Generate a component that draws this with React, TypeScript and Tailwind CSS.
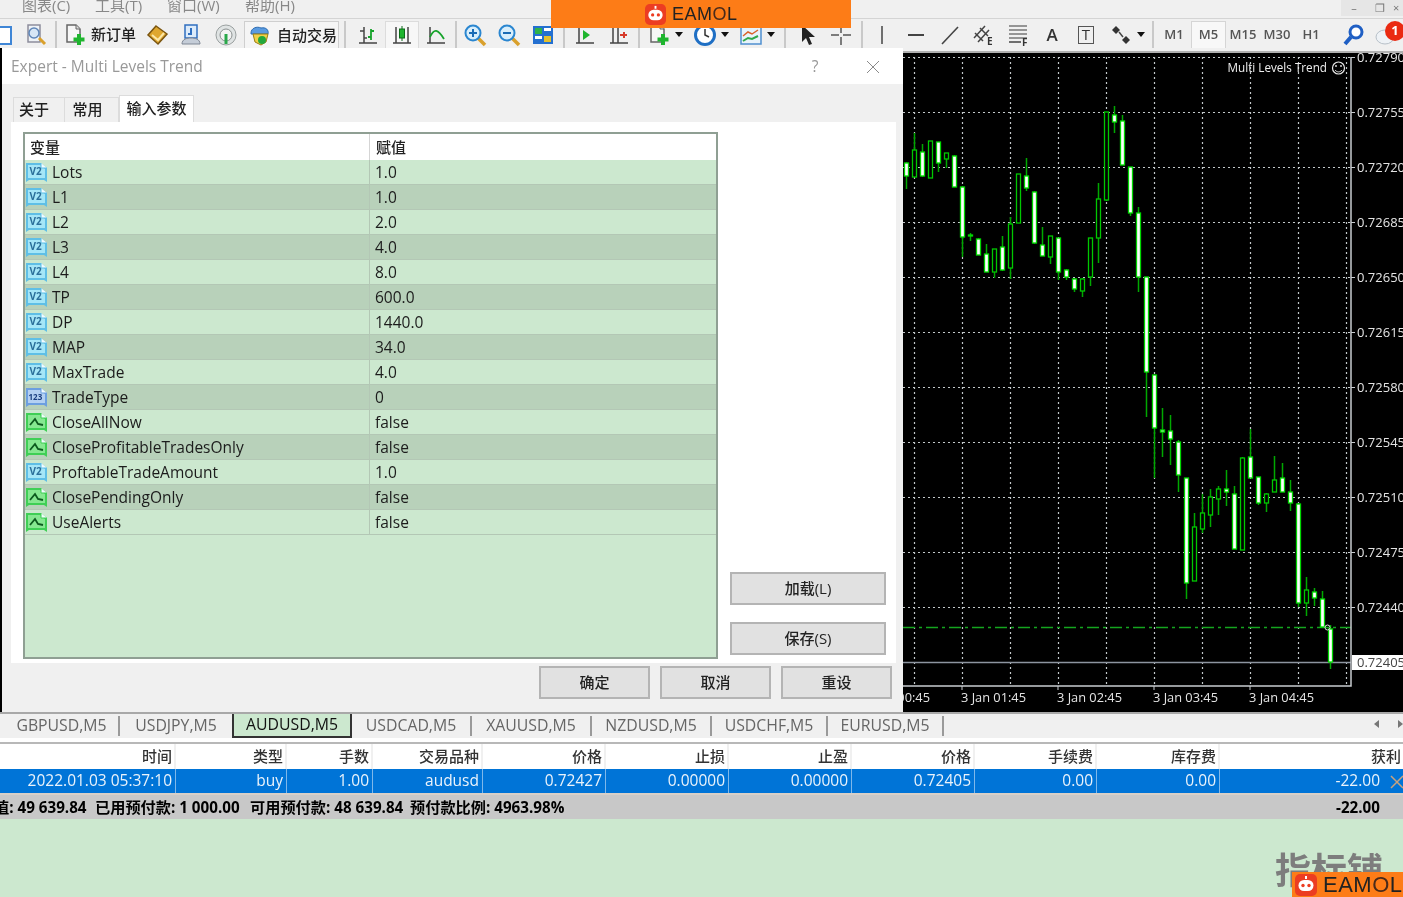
import React from 'react';

const params: [string, string, 'v' | 'n' | 'b'][] = [
  ['Lots', '1.0', 'v'],
  ['L1', '1.0', 'v'],
  ['L2', '2.0', 'v'],
  ['L3', '4.0', 'v'],
  ['L4', '8.0', 'v'],
  ['TP', '600.0', 'v'],
  ['DP', '1440.0', 'v'],
  ['MAP', '34.0', 'v'],
  ['MaxTrade', '4.0', 'v'],
  ['TradeType', '0', 'n'],
  ['CloseAllNow', 'false', 'b'],
  ['CloseProfitableTradesOnly', 'false', 'b'],
  ['ProftableTradeAmount', '1.0', 'v'],
  ['ClosePendingOnly', 'false', 'b'],
  ['UseAlerts', 'false', 'b'],
];

// [wickTop, wickBottom, bodyTop, bodyBottom, hollow] in page pixels
const candles: [number, number, number, number, number][] = [
  [162, 189, 163, 176, 0], [133, 177, 150, 177, 1], [144, 177, 152, 176, 0], [141, 178, 141, 178, 1],
  [142, 172, 142, 163, 0], [153, 168, 153, 159, 1], [155, 187, 156, 187, 0], [186, 257, 187, 237, 0],
  [233, 241, 235, 236, 0], [238, 255, 239, 255, 0], [244, 272, 254, 272, 0], [249, 278, 249, 272, 1],
  [236, 271, 247, 270, 0], [217, 279, 224, 268, 1], [174, 223, 174, 223, 1], [158, 191, 176, 188, 0],
  [191, 244, 192, 243, 0], [227, 256, 245, 256, 0], [236, 264, 236, 257, 1], [238, 280, 238, 272, 0],
  [269, 280, 270, 277, 0], [278, 292, 279, 289, 0], [278, 297, 279, 291, 1], [238, 286, 238, 277, 1],
  [183, 263, 199, 238, 1], [112, 201, 112, 200, 1], [106, 133, 115, 122, 0], [115, 165, 121, 165, 0],
  [167, 216, 167, 213, 0], [207, 292, 213, 277, 0], [277, 417, 277, 372, 0], [375, 478, 375, 428, 0],
  [408, 457, 430, 432, 0], [415, 465, 431, 439, 0], [440, 492, 442, 475, 0], [478, 599, 478, 583, 0],
  [513, 581, 527, 581, 1], [494, 533, 513, 529, 1], [489, 527, 497, 515, 1], [486, 515, 489, 499, 1],
  [470, 506, 489, 492, 0], [486, 549, 494, 549, 0], [457, 550, 458, 550, 1], [429, 478, 457, 478, 0],
  [477, 505, 477, 503, 0], [493, 512, 494, 503, 1], [456, 492, 480, 492, 1], [463, 492, 478, 492, 0],
  [480, 511, 492, 503, 0], [503, 607, 504, 603, 0], [577, 616, 590, 603, 1], [588, 606, 592, 598, 0],
  [591, 628, 599, 627, 0], [625, 669, 629, 662, 0],
];

const priceLines = [
  ['0.72790', 57], ['0.72755', 112], ['0.72720', 167], ['0.72685', 222], ['0.72650', 277],
  ['0.72615', 332], ['0.72580', 387], ['0.72545', 442], ['0.72510', 497], ['0.72475', 552], ['0.72440', 607],
] as const;

const gridX = [914, 962, 1010, 1058, 1106, 1154, 1202, 1250, 1298, 1346];

const symbolTabs = [
  ['GBPUSD,M5', 'w-[120px] pl-[5px]'], ['USDJPY,M5', 'w-[112px]'], ['AUDUSD,M5', 'w-[120px]'], ['USDCAD,M5', 'w-[120px]'],
  ['XAUUSD,M5', 'w-[120px]'], ['NZDUSD,M5', 'w-[120px]'], ['USDCHF,M5', 'w-[116px]'], ['EURUSD,M5', 'w-[116px]'],
];

const cols = ['时间', '类型', '手数', '交易品种', '价格', '止损', '止盈', '价格', '手续费', '库存费', '获利'];
const rowVals = ['2022.01.03 05:37:10', 'buy', '1.00', 'audusd', '0.72427', '0.00000', '0.00000', '0.72405', '0.00', '0.00', '-22.00'];
const colGrid = 'grid grid-cols-[176px_111px_86px_110px_123px_123px_123px_123px_122px_123px_1fr]';

const ParamIcon: React.FC<{ kind: 'v' | 'n' | 'b' }> = ({ kind }) => {
  const edge = kind === 'b' ? '#3fcf55' : kind === 'n' ? '#6d9fe0' : '#5fbfe6';
  const face = kind === 'b' ? '#86e891' : kind === 'n' ? '#b4d0f2' : '#a5e6f7';
  return (
    <svg width="22" height="20" viewBox="0 0 22 20" className="shrink-0">
      <path d="M0 1h15l6 5v14l-3-2H3l-3 2z" fill={edge} />
      <path d="M2 3h12l5 4v9H2z" fill={face} />
      <path d="M15 1v5h6" fill="#f2fbff" stroke={edge} />
      {kind === 'v' && <text x="3.500" y="13" fontSize="10" fontWeight="700" fill="#2b6f9a">V2</text>}
      {kind === 'n' && <text x="2.500" y="13" fontSize="8" fontWeight="700" fill="#1c3f80">123</text>}
      {kind === 'b' && <path d="M4 13l5-6 3 5 5 1" fill="none" stroke="#0d5a1f" strokeWidth="1.800" />}
    </svg>
  );
};

const Btn: React.FC<{ label: string; className: string }> = ({ label, className }) => (
  <button className={`h-[33px] bg-[#e1e1e1] border-2 border-[#b4b4b4] text-[15px] font-medium text-[#222] flex items-center justify-center ${className}`}>
    {label}
  </button>
);

const Slot: React.FC<{ className?: string; children?: React.ReactNode }> = ({ className = 'w-[34px]', children }) => (
  <div className={`h-[27px] shrink-0 flex items-center justify-center ${className}`}>{children}</div>
);

const Sep = ({ className = 'w-[6px]' }: { className?: string }) => (
  <div className={`h-[27px] shrink-0 flex justify-center ${className}`}>
    <div className="w-[2px] h-full bg-[#c9c9c9]" />
  </div>
);

const Caret = () => <div className="w-0 h-0 ml-[4px] border-x-[4px] border-x-transparent border-t-[5px] border-t-[#111]" />;

const Ico: React.FC<{ children: React.ReactNode; size?: number }> = ({ children, size = 24 }) => (
  <svg width={size} height={size} viewBox="0 0 24 24" className="shrink-0">{children}</svg>
);

const Lens: React.FC<{ plus?: boolean }> = ({ plus }) => (
  <Ico>
    <path d="M15 15l7 7" stroke="#d9a02c" strokeWidth="3.500" />
    <circle cx="10" cy="10" r="7.500" fill="#d8eefb" stroke="#2a86d0" strokeWidth="2" />
    <path d="M6 10h8" stroke="#1a6cb5" strokeWidth="2" />
    {plus && <path d="M10 6v8" stroke="#1a6cb5" strokeWidth="2" />}
  </Ico>
);

const PlusDoc = () => (
  <Ico>
    <path d="M4 2h9l4 4v13H4z" fill="#f6f6f6" stroke="#666" strokeWidth="1.500" />
    <path d="M13 2v4h4" fill="#ddd" stroke="#666" />
    <path d="M16 11v11M10.500 16.500h11" stroke="#1eb52e" strokeWidth="4" />
  </Ico>
);

const Robot: React.FC<{ size: number }> = ({ size }) => (
  <svg width={size} height={size} viewBox="0 0 22 22" className="shrink-0">
    <rect width="22" height="22" rx="5" fill="#ec3d22" />
    <path d="M11 2v3" stroke="#fff" strokeWidth="2" />
    <rect x="3.500" y="6" width="15" height="11" rx="5.500" fill="#fff" />
    <circle cx="8" cy="11.500" r="1.700" fill="#ec3d22" />
    <circle cx="14" cy="11.500" r="1.700" fill="#ec3d22" />
  </svg>
);

const Logo: React.FC<{ size: number; className: string }> = ({ size, className }) => (
  <div className="flex items-center gap-[6px]">
    <Robot size={size} />
    <span className={`font-['Liberation_Sans',sans-serif] text-[#222] tracking-[0.5px] ${className}`}>
      EAM<span className="text-[#4a2a1a]">O</span>L
    </span>
  </div>
);

const Toolbar = () => (
  <div className="h-[27px] flex items-center -ml-[15px] shrink-0">
    <Slot><Ico><rect x="3" y="4" width="18" height="17" fill="#fff" stroke="#3f86d6" strokeWidth="2" /></Ico></Slot>
    <Slot>
      <Ico>
        <path d="M4 2h12v17H4z" fill="#eef2f6" stroke="#8d8d9c" strokeWidth="1.500" />
        <circle cx="10" cy="10" r="5" fill="#d7e6f5" stroke="#5f86b8" strokeWidth="1.500" />
        <path d="M15 15l6 6" stroke="#d9a02c" strokeWidth="3" />
      </Ico>
    </Slot>
    <Sep />
    <Slot className="w-[32px]"><PlusDoc /></Slot>
    <span className="w-[51px] shrink-0 text-[15px] font-medium text-[#222]">新订单</span>
    <Slot className="w-[32px]">
      <Ico><path d="M10 3l11 8-9 10-10-9z" fill="#dfa72f" stroke="#7a5510" strokeWidth="1.500" /><path d="M6 12l6 5 6-7" fill="none" stroke="#fbe7a8" strokeWidth="2" /></Ico>
    </Slot>
    <Slot>
      <Ico>
        <path d="M6 2h12v13H6z" fill="#dcebfa" stroke="#2f6fc0" strokeWidth="1.500" />
        <path d="M12 5v6h-3" fill="none" stroke="#2f6fc0" strokeWidth="2" />
        <path d="M3 21c0-5 5-6 9-6s9 1 9 6z" fill="#c5cdd8" stroke="#7e8795" />
      </Ico>
    </Slot>
    <Slot className="w-[36px]">
      <Ico>
        <circle cx="12" cy="12" r="10" fill="#dfe3e3" stroke="#9aa0a0" />
        <circle cx="12" cy="12" r="6" fill="#f3f3f3" stroke="#8a9090" />
        <path d="M12 11v10" stroke="#2aa84a" strokeWidth="3" />
      </Ico>
    </Slot>
    <div className="w-[95px] h-[27px] shrink-0 border-x border-t border-[#cfcfcf] flex items-center pl-[3px] gap-[5px] bg-[#f5f5f5]">
      <Ico>
        <path d="M3 10c0-5 6-7 10-5 5-1 8 2 7 6H3z" fill="#5a9be0" stroke="#2b6ab0" />
        <path d="M5 11h15l-2 8-5 3-6-3z" fill="#f1d049" stroke="#9a7d12" />
        <circle cx="14" cy="17" r="4" fill="#23a83c" />
      </Ico>
      <span className="text-[15px] font-medium text-[#222] whitespace-nowrap">自动交易</span>
    </div>
    <Sep className="w-[12px]" />
    <Slot>
      <Ico>
        <path d="M8 4v16M4 8h4M8 15h3M3 20h18" fill="none" stroke="#444" strokeWidth="1.500" />
        <path d="M15 6v11M15 8h3M12 14h3" fill="none" stroke="#17a32b" strokeWidth="1.800" />
      </Ico>
    </Slot>
    <Slot className="w-[34px] bg-[#f7f7f7] border-x border-t border-[#dcdcdc]">
      <Ico>
        <path d="M6 4v16M18 4v16M3 20h18" fill="none" stroke="#444" strokeWidth="1.500" />
        <path d="M12 3v15" stroke="#0b6b18" />
        <rect x="9.500" y="6" width="5" height="9" fill="#1eb52e" stroke="#0b6b18" />
      </Ico>
    </Slot>
    <Slot>
      <Ico>
        <path d="M6 4v16M3 20h18" fill="none" stroke="#444" strokeWidth="1.500" />
        <path d="M6 14C10 5 14 6 20 16" fill="none" stroke="#17a32b" strokeWidth="1.800" />
      </Ico>
    </Slot>
    <Sep className="w-[5px]" />
    <Slot><Lens plus /></Slot>
    <Slot><Lens /></Slot>
    <Slot>
      <Ico>
        <rect x="2" y="3" width="20" height="18" fill="#2470d0" />
        <rect x="4" y="5" width="7" height="6" fill="#2fb24a" /><rect x="13" y="5" width="7" height="3" fill="#fff" />
        <rect x="4" y="13" width="7" height="3" fill="#fff" /><rect x="13" y="13" width="7" height="6" fill="#e4c02f" />
      </Ico>
    </Slot>
    <Sep className="w-[8px]" />
    <Slot>
      <Ico>
        <path d="M6 4v16M3 20h18" fill="none" stroke="#444" strokeWidth="1.500" />
        <path d="M10 7l7 5-7 5z" fill="#1eb52e" />
      </Ico>
    </Slot>
    <Slot>
      <Ico>
        <path d="M6 4v16M11 4v16M3 20h18" fill="none" stroke="#444" strokeWidth="1.500" />
        <path d="M13 12h7M17 9v6" stroke="#d63a2a" strokeWidth="2" />
      </Ico>
    </Slot>
    <Sep />
    <Slot className="w-[46px] justify-start pl-[5px]"><PlusDoc /><Caret /></Slot>
    <Slot className="w-[46px] justify-start pl-[5px]">
      <Ico>
        <circle cx="12" cy="12" r="9.500" fill="#fff" stroke="#1f6fc4" strokeWidth="3" />
        <path d="M12 6v6l4 2" fill="none" stroke="#333" strokeWidth="1.500" />
      </Ico>
      <Caret />
    </Slot>
    <Slot className="w-[46px] justify-start pl-[5px]">
      <Ico>
        <rect x="2" y="3" width="20" height="18" fill="#e8f3fb" stroke="#4f8fcf" strokeWidth="1.500" />
        <path d="M4 13l5-4 4 2 6-4" fill="none" stroke="#d9622a" strokeWidth="1.500" />
        <path d="M4 18l5-3 4 1 6-3" fill="none" stroke="#2fa84a" strokeWidth="2" />
      </Ico>
      <Caret />
    </Slot>
    <Sep className="w-[9px]" />
    <Slot>
      <Ico><path d="M8 2l0 17 4-4 3 7 3-1-3-7h6z" fill="#222" /></Ico>
    </Slot>
    <Slot className="w-[36px]">
      <Ico><path d="M12 2v8M12 14v8M2 12h8M14 12h8" stroke="#555" strokeWidth="1.500" /></Ico>
    </Slot>
    <Sep />
    <Slot><Ico><path d="M12 3v18" stroke="#444" strokeWidth="1.500" /></Ico></Slot>
    <Slot><Ico><path d="M4 12h16" stroke="#444" strokeWidth="2" /></Ico></Slot>
    <Slot><Ico><path d="M4 21L20 4" stroke="#444" strokeWidth="1.600" /></Ico></Slot>
    <Slot>
      <svg width="24" height="24" viewBox="0 0 24 24">
        <path d="M2 15L13 3M6 19L17 7M3 10l8 8M8 5l8 8" stroke="#444" strokeWidth="1.500" />
        <text x="15" y="22" fontSize="10" fontWeight="700" fill="#333">E</text>
      </svg>
    </Slot>
    <Slot>
      <svg width="24" height="24" viewBox="0 0 24 24">
        <path d="M3 3h18M3 7h18M3 11h18M3 15h18" stroke="#777" strokeWidth="1.500" />
        <path d="M3 19h12" stroke="#444" strokeWidth="1.500" />
        <text x="16" y="23" fontSize="10" fontWeight="700" fill="#333">F</text>
      </svg>
    </Slot>
    <Slot><span className="text-[17px] font-semibold text-[#333]">A</span></Slot>
    <Slot>
      <div className="w-[16px] h-[18px] border border-[#555] flex items-center justify-center text-[15px] leading-none text-[#333]">T</div>
    </Slot>
    <Slot className="w-[46px] justify-start pl-[6px]">
      <Ico>
        <path d="M7 3l4 4-4 4-4-4zM17 13l4 4-4 4-4-4z" fill="#333" />
        <path d="M10 9l4 5" stroke="#444" strokeWidth="1.500" />
      </Ico>
      <Caret />
    </Slot>
    <Sep className="w-[8px]" />
    <Slot className="w-[34px] text-[13px] font-semibold text-[#555]">M1</Slot>
    <Slot className="w-[35px] text-[13px] font-semibold text-[#555] bg-[#f8f8f8] border-x border-t border-[#d5d5d5]">M5</Slot>
    <Slot className="w-[34px] text-[13px] font-semibold text-[#555]">M15</Slot>
    <Slot className="w-[34px] text-[13px] font-semibold text-[#555]">M30</Slot>
    <Slot className="w-[34px] text-[13px] font-semibold text-[#555]">H1</Slot>
    <Slot className="w-[9px]" />
    <Slot>
      <Ico><circle cx="14" cy="9" r="6" fill="#fff" stroke="#1f5fc4" strokeWidth="3" /><path d="M9 14l-6 7" stroke="#1f5fc4" strokeWidth="4" /></Ico>
    </Slot>
    <Slot className="w-[31px] relative">
      <Ico><ellipse cx="10" cy="14" rx="9" ry="7" fill="#eef2f6" stroke="#b7c0c8" /></Ico>
      <span className="absolute left-[14px] top-[0px] w-[20px] h-[20px] rounded-full bg-[#ea2a12] text-white text-[13px] font-bold flex items-center justify-center">1</span>
    </Slot>
  </div>
);

const Chart = () => (
  <svg viewBox="903 53 500 659" className="w-[500px] h-[659px] block">
    <rect x="903" y="53" width="500" height="659" fill="#000" />
    {priceLines.map(([, y]) => (
      <line key={y} x1="903" x2="1351" y1={y + 0.5} y2={y + 0.5} stroke="#c2c8ca" strokeWidth="1.200" strokeDasharray="2 3" />
    ))}
    {gridX.map(x => (
      <line key={x} x1={x + 0.5} x2={x + 0.5} y1="57" y2="686" stroke="#c2c8ca" strokeWidth="1.200" strokeDasharray="2 3" />
    ))}
    <line x1="903" x2="1351" y1="662.500" y2="662.500" stroke="#8d95a0" strokeWidth="1.500" />
    <line x1="903" x2="1351" y1="627.500" y2="627.500" stroke="#14a51f" strokeDasharray="12 4 3 4" strokeWidth="1.500" />
    {candles.map(([wt, wb, bt, bb, hollow], i) => {
      const x = 906.5 + i * 8;
      return (
        <g key={i}>
          <line x1={x} x2={x} y1={wt} y2={wb} stroke="#00a800" strokeWidth="1.500" />
          <rect x={x - 2} y={bt} width="4" height={Math.max(bb - bt, 1)} fill={hollow ? '#000' : '#fff'} stroke={hollow ? '#00c800' : '#00d800'} strokeWidth="1.300" />
        </g>
      );
    })}
    <circle cx="1327.500" cy="627.500" r="2.500" fill="none" stroke="#ddd" />
    <path d="M1351 57v629H903" fill="none" stroke="#c8ccd0" strokeWidth="1.500" />
    {priceLines.map(([label, y]) => (
      <g key={label}>
        <line x1="1351" x2="1355" y1={y + 0.5} y2={y + 0.5} stroke="#c8ccd0" />
        <text x="1357" y={y + 5} fontSize="13" fontWeight="500" fill="#e4e4e4">{label}</text>
      </g>
    ))}
    <rect x="1352" y="655" width="51" height="15" fill="#fff" />
    <text x="1357" y="667" fontSize="13" fontWeight="500" fill="#444">0.72405</text>
    {[866, 962, 1058, 1154, 1250].map((x, i) => (
      <g key={x}>
        <line x1={x} x2={x} y1="686" y2="690" stroke="#c8ccd0" />
        <text x={x - 1} y="702" fontSize="12.800" fontWeight="500" fill="#e4e4e4">{`3 Jan 0${i}:45`}</text>
      </g>
    ))}
    <text x="1327" y="72" fontSize="11.700" fontWeight="500" fill="#efefef" textAnchor="end">Multi Levels Trend</text>
    <circle cx="1338.500" cy="68" r="6" fill="none" stroke="#e8e8e8" strokeWidth="1.200" />
    <circle cx="1336" cy="66" r="0.900" fill="#e8e8e8" />
    <circle cx="1341" cy="66" r="0.900" fill="#e8e8e8" />
    <path d="M1335 70c2 2.500 5 2.500 7 0" fill="none" stroke="#e8e8e8" />
  </svg>
);

const ExpertDialog = () => (
  <div className="w-[903px] h-[664px] shrink-0 border-l-2 border-black bg-[#f0f0f0] flex flex-col">
    <div className="h-[36px] shrink-0 bg-white flex items-center pl-[9px] pt-[2px] text-[15.500px] text-[#999]">
      <span className="flex-1">Expert - Multi Levels Trend</span>
      <span className="w-[20px] text-center text-[#999] mr-[41px]">?</span>
      <svg width="14" height="14" viewBox="0 0 14 14" className="mr-[23px]">
        <path d="M1 1l12 12M13 1L1 13" stroke="#8a8a8a" />
      </svg>
    </div>
    <div className="h-[38px] shrink-0 pl-[11px] flex items-end text-[15px] font-medium text-[#222]">
      <div className="w-[52px] h-[25px] pb-[2px] border border-b-0 border-[#dcdcdc] flex items-center justify-center pr-[10px]">关于</div>
      <div className="w-[54px] h-[25px] pb-[2px] border border-b-0 border-l-0 border-[#dcdcdc] flex items-center justify-center pr-[8px]">常用</div>
      <div className="w-[75px] h-[27px] pb-[2px] bg-white border border-b-0 border-[#dcdcdc] flex items-center justify-center">输入参数</div>
    </div>
    <div className="h-[541px] w-[885px] ml-[9px] shrink-0 bg-white flex pt-[10px] pl-[12px]">
      <div className="w-[695px] h-[527px] shrink-0 border-2 border-[#8f9f93] bg-[#cce8cf] flex flex-col">
        <div className="h-[26px] shrink-0 bg-white grid grid-cols-[344px_1fr] text-[15px] font-medium text-[#222] items-center">
          <span className="pl-[5px]">变量</span>
          <span className="h-full border-l border-[#d5d5d5] pl-[6px] flex items-center">赋值</span>
        </div>
        {params.map(([name, value, kind], i) => (
          <div key={name} className={`h-[25px] shrink-0 grid grid-cols-[344px_1fr] items-center border-b border-[#b3c7b5] text-[15.500px] font-medium text-[#1c1c1c] ${i % 2 ? 'bg-[#b8d1ba]' : 'bg-[#cce8cf]'}`}>
            <div className="flex items-center gap-[4px] pl-[1px]">
              <ParamIcon kind={kind} />
              <span className="pt-[1px]">{name}</span>
            </div>
            <span className="h-full border-l border-[#b3c7b5] pl-[5px] pt-[1px] flex items-center">{value}</span>
          </div>
        ))}
      </div>
      <div className="w-[156px] ml-[12px] h-[527px] flex flex-col justify-end gap-[17px] pb-[4px]">
        <Btn label="加载(L)" className="w-full" />
        <Btn label="保存(S)" className="w-full" />
      </div>
    </div>
    <div className="flex justify-end gap-[10px] pr-[11px] pt-[3px] relative">
      <Btn label="确定" className="w-[111px]" />
      <Btn label="取消" className="w-[111px]" />
      <Btn label="重设" className="w-[111px]" />
    </div>
  </div>
);

export default function App() {
  return (
    <div className="w-full h-screen relative overflow-hidden bg-[#cce8cf] flex flex-col font-['Open_Sans','Noto_Sans_CJK_SC',sans-serif] blur-[0.4px]">
      {/* menu */}
      <div className="h-[18px] shrink-0 bg-[#f0f0f0] flex items-start text-[15px] leading-[10px] text-[#888] pl-[22px]">
        <span className="w-[73px]">图表(C)</span>
        <span className="w-[72px]">工具(T)</span>
        <span className="w-[78px]">窗口(W)</span>
        <span>帮助(H)</span>
        <div className="ml-auto w-[62px] h-[16px] bg-[#e6e6e6] flex items-center text-[11px] text-[#777]">
          <span className="w-[26px] text-center">–</span>
          <span className="w-[26px] text-center">❐</span>
          <span>×</span>
        </div>
      </div>
      <div className="h-[30px] shrink-0 bg-[#f0f0f0] overflow-hidden border-t border-[#d4d4d4] pt-[2px]"><Toolbar /></div>

      <div className="h-[664px] shrink-0 flex bg-[#f0f0f0]">
        <ExpertDialog />
        <div className="flex-1 overflow-hidden">
          <div className="h-[5px] border-b-2 border-[#b0b0b0]" />
          <Chart />
        </div>
      </div>

      {/* symbol tabs */}
      <div className="h-[26px] shrink-0 bg-[#f0f0f0] border-t-2 border-[#a8a8a8] flex text-[15.800px] relative">
        {symbolTabs.map(([name, w]) =>
          name === 'AUDUSD,M5' ? (
            <div key={name} className={`${w} h-[24px] bg-[#cce8cf] border-x-2 border-b-2 border-[#333] font-medium text-[#111] flex items-center justify-center`}>{name}</div>
          ) : (
            <div key={name} className={`${w} h-[20px] mt-[2px] text-[#666] flex items-center justify-center ${name === 'USDJPY,M5' ? '' : 'border-r-2 border-[#9a9a9a]'}`}>{name}</div>
          )
        )}
        <div className="absolute left-[1374px] top-[6px] w-0 h-0 border-y-[4px] border-y-transparent border-r-[5px] border-r-[#777]" />
        <div className="absolute left-[1398px] top-[6px] w-0 h-0 border-y-[4px] border-y-transparent border-l-[5px] border-l-[#777]" />
      </div>
      <div className="h-[6px] shrink-0 bg-white border-b-2 border-[#b8b8b8]" />

      {/* trade table */}
      <div className={`${colGrid} h-[25px] shrink-0 bg-white text-[15px] font-medium text-[#333]`}>
        {cols.map((c, i) => (
          <div key={i} className={`flex items-center justify-end pr-[2px] border-r-2 border-[#f0f0f0] whitespace-nowrap ${i === 10 ? '-mr-[2px]' : ''}`}>{c}</div>
        ))}
      </div>
      <div className={`${colGrid} h-[26px] shrink-0 bg-[#0074d7] border-b-2 border-[#d8d0c8] text-[15.500px] text-[#eaf3fb]`}>
        {rowVals.map((v, i) => (
          <div key={i} className={`flex items-center justify-end border-r border-[#7fb8ea] ${i === 10 ? 'pr-[23px] border-r-0' : 'pr-[3px]'}`}>{v}</div>
        ))}
      </div>
      <div className="h-[24px] shrink-0 bg-[#c8c8c8] flex items-center text-[15.200px] font-bold text-black whitespace-nowrap pr-[23px]">
        <span className="-ml-[6px] w-[101px] shrink-0">值: 49 639.84</span>
        <span className="w-[155px] shrink-0">已用预付款: 1 000.00</span>
        <span className="w-[160px] shrink-0">可用预付款: 48 639.84</span>
        <span>预付款比例: 4963.98%</span>
        <span className="ml-auto">-22.00</span>
      </div>

      {/* overlays */}
      <svg width="14" height="14" viewBox="0 0 14 14" className="absolute left-[1390px] top-[775px]">
        <path d="M1 1l12 12M13 1L1 13" stroke="#c9a27e" strokeWidth="1.500" />
      </svg>
      <div className="absolute left-[551px] top-0 w-[300px] h-[28px] bg-[#fd7c17] flex items-center pl-[94px]">
        <Logo size={21} className="text-[18px]" />
      </div>
      <div className="absolute left-[1275px] top-[853px] text-[36px] leading-none font-bold text-[#7d7d7d] whitespace-nowrap">指标铺</div>
      <div className="absolute left-[1292px] top-[872px] w-[111px] h-[25px] bg-[#fd7c17] flex items-center pl-[3px]">
        <Logo size={22} className="text-[22px]" />
      </div>
    </div>
  );
}
